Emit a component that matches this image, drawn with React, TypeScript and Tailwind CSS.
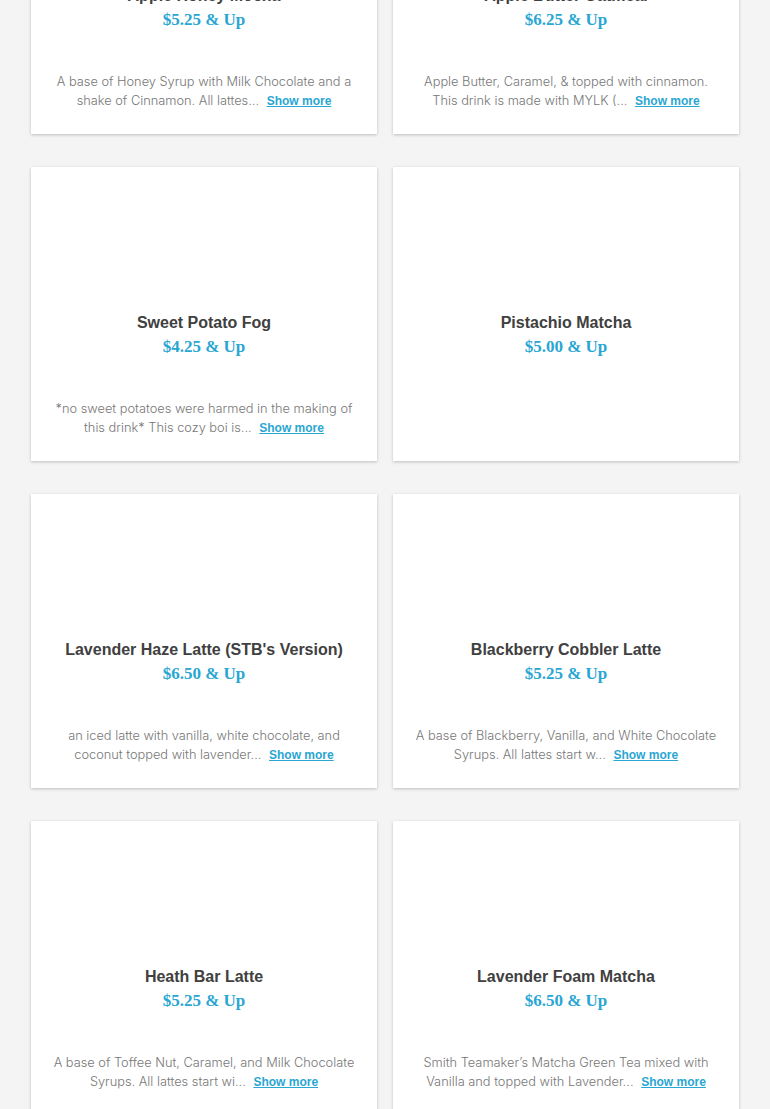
import React from "react";

interface Drink {
	name: string;
	price: string;
	desc?: string;
}

const drinks: Drink[] = [
	{ name: "Apple Honey Mocha", price: "$5.25 & Up", desc: "A base of Honey Syrup with Milk Chocolate and a shake of Cinnamon. All lattes..." },
	{ name: "Apple Butter Oatmeal", price: "$6.25 & Up", desc: "Apple Butter, Caramel, & topped with cinnamon. This drink is made with MYLK (..." },
	{ name: "Sweet Potato Fog", price: "$4.25 & Up", desc: "*no sweet potatoes were harmed in the making of this drink* This cozy boi is..." },
	{ name: "Pistachio Matcha", price: "$5.00 & Up" },
	{ name: "Lavender Haze Latte (STB's Version)", price: "$6.50 & Up", desc: "an iced latte with vanilla, white chocolate, and coconut topped with lavender..." },
	{ name: "Blackberry Cobbler Latte", price: "$5.25 & Up", desc: "A base of Blackberry, Vanilla, and White Chocolate Syrups. All lattes start w..." },
	{ name: "Heath Bar Latte", price: "$5.25 & Up", desc: "A base of Toffee Nut, Caramel, and Milk Chocolate Syrups. All lattes start wi..." },
	{ name: "Lavender Foam Matcha", price: "$6.50 & Up", desc: "Smith Teamaker’s Matcha Green Tea mixed with Vanilla and topped with Lavender..." },
];

const DrinkCard: React.FC<{ drink: Drink }> = ({ drink }) => {
	return (
		<div className="flex h-[294px] flex-col bg-white px-[18px] pb-6 shadow-[0_1px_3px_rgba(0,0,0,0.22)]">
			<div className="h-[147px] shrink-0" />
			<h3 className="text-center font-['Liberation_Sans',Arial,sans-serif] text-[16px] font-bold leading-[18px] text-[#404040]">
				{drink.name}
			</h3>
			<p className="mt-[5px] text-center font-['Liberation_Serif','Times_New_Roman',serif] text-[17px] font-bold leading-[20px] text-[#2aa6d2]">
				{drink.price}
			</p>
			<div className="mt-auto h-[38px] text-center font-['Inter','Open_Sans',sans-serif] text-[12.8px] leading-[19px] font-light text-[#777]">
				{drink.desc && (
					<>
						<span>{drink.desc}</span>{" "}
						<a
							href="#"
							className="ml-1 font-['Liberation_Sans',Arial,sans-serif] text-[12px] font-bold text-[#2aa6d2] underline"
						>
							Show more
						</a>
					</>
				)}
			</div>
		</div>
	);
};

export default function App() {
	return (
		<div className="min-h-[1109px] overflow-hidden bg-[#f4f4f4]">
			<div className="-mt-[160px] grid grid-cols-2 gap-x-4 gap-y-[33px] px-[31px] pb-10">
				{drinks.map((d, idx) => (
					<DrinkCard drink={d} key={idx} />
				))}
			</div>
		</div>
	);
}
